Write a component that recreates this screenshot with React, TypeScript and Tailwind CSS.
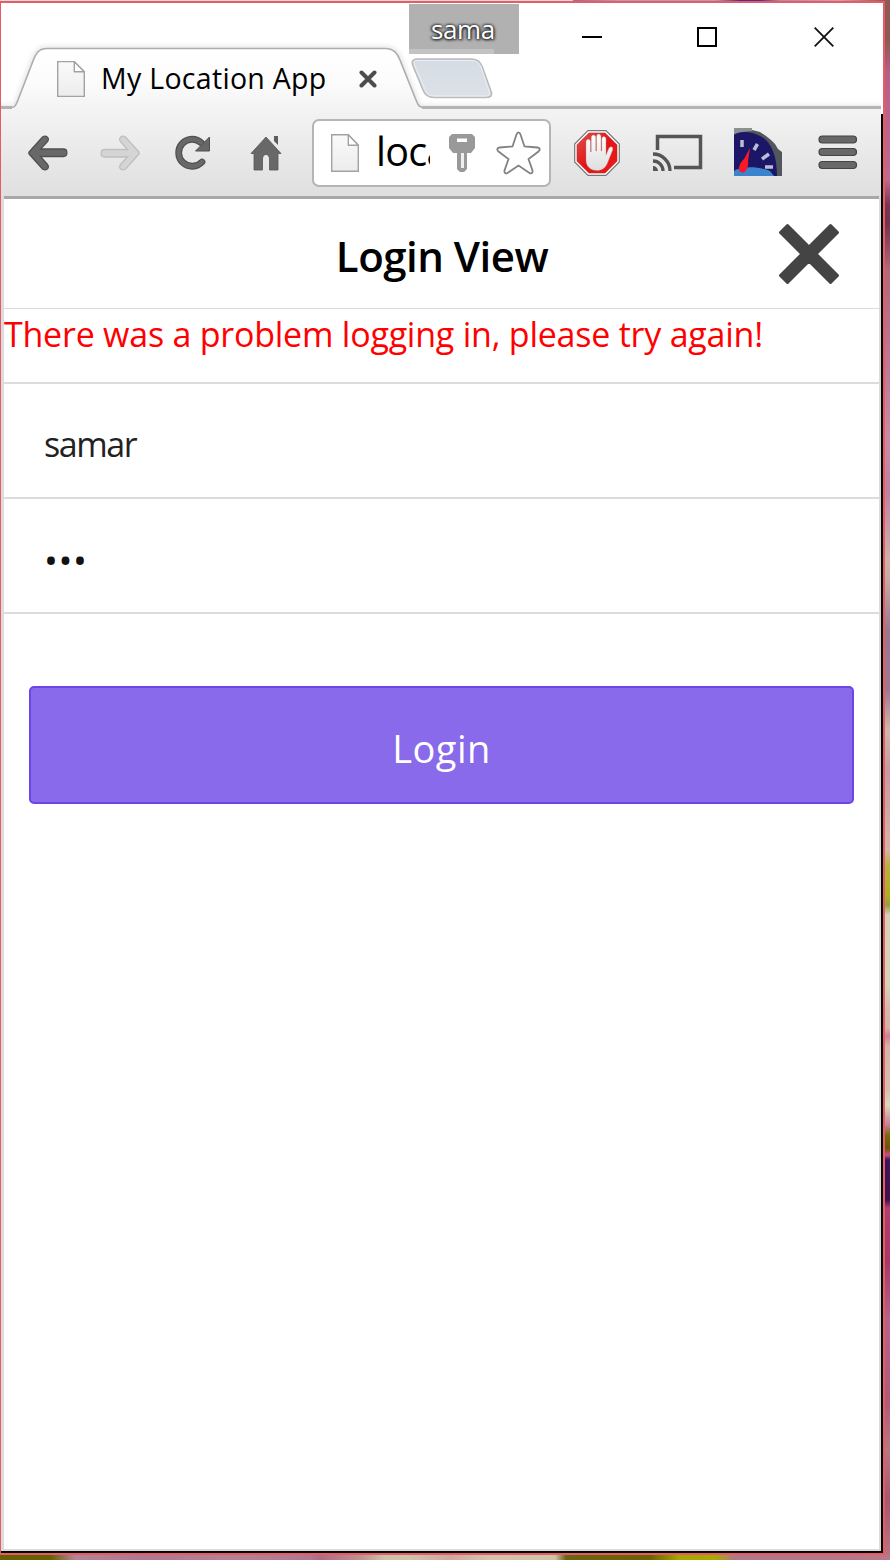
import React from "react";

const wallpaper = {
  background:
    "linear-gradient(180deg,#905a55 0px,#8e5a50 40px,#b85f88 75px,#c06a8e 180px,#7a3552 205px,#74304c 222px,#b06a78 270px,#bb7390 340px,#c98ba3 440px,#c080a0 490px,#d0b0a8 560px,#c8a8a0 580px,#9a7890 630px,#a07890 690px,#d0b8a8 730px,#c89aa0 770px,#d5b3a6 850px,#b8b040 866px,#b0b020 895px,#96a040 905px,#d8d0b8 915px,#d5d3b8 985px,#d4b8a8 1010px,#d4b4a8 1028px,#d08090 1036px,#d4b4a8 1046px,#d8bdac 1090px,#d8dabc 1105px,#c88090 1125px,#7a6a10 1135px,#6b5400 1148px,#c85080 1155px,#3a145c 1160px,#45104f 1200px,#b04070 1208px,#a83868 1260px,#b5658a 1320px,#b05a78 1400px,#b87880 1450px,#a85870 1500px,#b87880 1560px)",
};
const wallpaperBottom = {
  background:
    "linear-gradient(90deg,#666000 0px,#666000 50px,#b48494 75px,#b07890 150px,#b68294 230px,#b07890 310px,#b06a84 320px,#c09090 360px,#cdc2a8 385px,#cfc3aa 410px,#d0a8a0 450px,#d4c4aa 490px,#cfc3a5 555px,#6a6410 566px,#6e6000 650px,#a8a800 680px,#a8aa00 715px,#b07888 735px,#b87888 890px)",
};
const wallpaperTop = {
  background:
    "linear-gradient(90deg,#dcdcdc 0px,#dcdcdc 572px,#9c6a90 574px,#b0a0b8 620px,#b0a0b8 715px,#4a3090 740px,#4a3090 760px,#a890a8 780px,#d0a0b0 840px,#905a55 885px)",
};

function ChromeBackdrop() {
  return (
    <svg className="absolute left-0 top-0" width="880" height="193" viewBox="1 3 880 193">
      <defs>
        <linearGradient id="chrome" gradientUnits="userSpaceOnUse" x1="0" y1="48" x2="0" y2="196">
          <stop offset="0" stopColor="#ffffff" />
          <stop offset="0.22" stopColor="#fcfcfc" />
          <stop offset="0.42" stopColor="#f3f3f3" />
          <stop offset="1" stopColor="#dfdfdf" />
        </linearGradient>
        <linearGradient id="newtab" x1="0" y1="0" x2="0" y2="1">
          <stop offset="0" stopColor="#d5dce4" />
          <stop offset="1" stopColor="#dce1e8" />
        </linearGradient>
        <filter id="soft" x="-5%" y="-20%" width="110%" height="140%">
          <feGaussianBlur stdDeviation="2.5" />
        </filter>
      </defs>
      <path d="M-8 107.5H11C15 107.5 16 105 18 100L33 61C36 53 39 48.5 47 48.5H386C393 48.5 397 52 400 60L416 100C418 105 419 107.5 424 107.5H890" fill="none" stroke="#bbb" strokeWidth="4" opacity=".45" filter="url(#soft)" />
      <path d="M-8 107.5H11C15 107.5 16 105 18 100L33 61C36 53 39 48.5 47 48.5H386C393 48.5 397 52 400 60L416 100C418 105 419 107.5 424 107.5H890V200H-8Z" fill="url(#chrome)" />
      <path d="M-8 107.5H11C15 107.5 16 105 18 100L33 61C36 53 39 48.5 47 48.5H386C393 48.5 397 52 400 60L416 100C418 105 419 107.5 424 107.5" fill="none" stroke="#adadad" strokeWidth="1.6" />
      <path d="M1 107.5H12M422 107.5H890" stroke="#b4b4b4" strokeWidth="3" />
      <path d="M417 59H471C477 59 480 61 482 66L491 91C493 96 490 97.500 486 97.500H434C428 97.500 425 95 423 90L413 66C411 61 413 59 417 59Z" fill="url(#newtab)" stroke="#b8babd" strokeWidth="1.500" />
      <path d="M418 60.500H470C476 60.500 479 62 481 67L489 91C490 95 489 96 485 96H435C429 96 427 94 425 89L415 66C413.500 62 414 60.500 418 60.500Z" fill="none" stroke="#eceff2" strokeWidth="1" />
    </svg>
  );
}

function PageIcon({ className, id }: { className: string; id: string }) {
  return (
    <svg className={className} viewBox="0 0 28 37" preserveAspectRatio="none">
      <defs>
        <linearGradient id={id} x1="0" y1="0" x2="0" y2="1">
          <stop offset="0" stopColor="#fafafa" />
          <stop offset="1" stopColor="#ececec" />
        </linearGradient>
      </defs>
      <path d="M.7.7H17.300L27.300 11V36.300H.7Z" fill={`url(#${id})`} stroke="#a2a2a2" strokeWidth="1.400" />
      <path d="M17.300.7V11H27.300Z" fill="#fff" stroke="#a2a2a2" strokeWidth="1.400" strokeLinejoin="round" />
    </svg>
  );
}

function Arrow({ className, fill, stroke }: { className: string; fill: string; stroke: string }) {
  return (
    <svg className={className} viewBox="0 0 40 36">
      <path d="M1.500 16.500L14.500 2C18 -.5 22 3 19.500 6.500L12.500 14H35.500C40 14 40 21.500 35.500 21.500H12.500L19.500 29.500C22 33 18 36.500 14.500 34L1.500 19.500C.5 18.300.5 17.700 1.500 16.500Z" fill={fill} stroke={stroke} strokeWidth="1.300" />
    </svg>
  );
}

function StopHand() {
  return (
    <svg className="ml-[23px] size-[46px]" viewBox="0 0 46 46">
      <defs>
        <linearGradient id="red" x1="0" y1="0" x2="1" y2="1">
          <stop offset="0" stopColor="#e05050" />
          <stop offset=".5" stopColor="#e51414" />
          <stop offset="1" stopColor="#f01818" />
        </linearGradient>
        <linearGradient id="hand" x1="0" y1="0" x2="0" y2="1">
          <stop offset="0" stopColor="#fff" />
          <stop offset="1" stopColor="#dedede" />
        </linearGradient>
      </defs>
      <path d="M14 .7H32L45.300 14V32L32 45.300H14L.7 32V14Z" fill="#fff" stroke="#777" strokeWidth="1.200" />
      <path d="M14.800 3H31.200L43 14.800V31.200L31.200 43H14.800L3 31.200V14.800Z" fill="url(#red)" stroke="#b83030" strokeWidth=".6" />
      <path d="M12 28V12C12 8.300 16.500 8.300 16.500 12V22H17.200V7.500C17.200 4 21.800 4 21.800 7.500V21H22.500V6.500C22.500 3 27 3 27 6.500V21H27.700V9C27.700 5.500 32 5.500 32 9V25L34.500 19C36 15.500 40 16.500 38.500 20.500L33.500 33C31 38.500 28 40.500 23 40.500C16 40.500 12 36 12 30Z" fill="url(#hand)" stroke="#b09090" strokeWidth=".4" />
    </svg>
  );
}

function Gauge() {
  return (
    <svg className="ml-[31px] size-[49px]" viewBox="0 0 49 49">
      <path d="M0 0H18V2L26 4L32 8L37 12L41 16L44 21L48 24V48H0Z" fill="#52575b" />
      <path d="M0 0H18V3L8 4L0 6Z" fill="#8b9094" />
      <path d="M0 7C5 3 16 3 24 7C36 12 43 25 43 48H0Z" fill="#1b1766" />
      <path d="M0 43C8 38 24 38 36 43L40 48H0Z" fill="#3b83cc" />
      <path d="M8 12V19M23.500 16L20 22M35 26L28 31M31 39H39" stroke="#b9bed8" strokeWidth="3.500" />
      <path d="M16 20L14 33C14.500 38 13 43 9.500 44.500C5 45 4 41 5.500 38C6 35 8 33 10 31Z" fill="#fc1727" />
    </svg>
  );
}

function Chrome() {
  return (
    <header className="relative h-[193px] w-[880px]">
      <ChromeBackdrop />
      <div className="absolute left-[408px] top-[1px] h-[50px] w-[110px] bg-[#b1b1b1]">
        <div className="h-[45px] pl-[22px] pt-[5px] text-[26px] leading-[40px] tracking-[-0.4px] text-white [text-shadow:0_0_3px_#222,1px_1px_3px_#222,-1px_0_3px_#333]">sama</div>
        <div className="h-[5px] w-[85px] bg-[#c3c3c3]" />
      </div>
      <div className="relative flex h-[106px]">
        <div className="flex w-[410px] items-center pl-[56px] pt-[46px]">
          <PageIcon id="page-tab" className="h-[36px] w-[28px] shrink-0" />
          <span className="ml-[16px] w-[226px] whitespace-nowrap pb-[2px] text-[28.500px] leading-[36px] tracking-[0.3px] text-black">My Location App</span>
          <svg className="ml-[32px] size-[18px]" viewBox="0 0 18 18">
            <path d="M2.500 2.500L15.500 15.500M15.500 2.500L2.500 15.500" stroke="#4d4d4d" strokeWidth="4" strokeLinecap="round" />
          </svg>
        </div>
        <div className="flex pl-[171px] pt-[24px]">
          <svg className="size-[21px]" viewBox="0 0 21 21"><path d="M0 10H20" stroke="#000" strokeWidth="2" /></svg>
          <svg className="ml-[94px] size-[21px]" viewBox="0 0 21 21"><path d="M1 1H19V19H1Z" fill="none" stroke="#000" strokeWidth="2" /></svg>
          <svg className="ml-[96px] size-[21px]" viewBox="0 0 21 21"><path d="M.7.7L19.300 19.300M19.300.7L.7 19.300" stroke="#111" strokeWidth="1.800" /></svg>
        </div>
      </div>
      <div className="relative flex h-[87px] items-center">
        <Arrow className="ml-[27px] h-[36px] w-[40px]" fill="#686868" stroke="#505050" />
        <Arrow className="ml-[32px] h-[36px] w-[40px] rotate-180" fill="#d5d5d5" stroke="#bfbfbf" />
        <svg className="ml-[35px] h-[36px] w-[36px]" viewBox="0 0 36 36">
          <path d="M27 27A13.500 13.500 0 1 1 26.500 8" fill="none" stroke="#505050" strokeWidth="6.800" strokeLinecap="round" />
          <path d="M27 27A13.500 13.500 0 1 1 26.500 8" fill="none" stroke="#686868" strokeWidth="4.500" strokeLinecap="round" />
          <path d="M34.500 2V16H20.500Z" fill="#686868" stroke="#505050" strokeWidth="1" />
        </svg>
        <svg className="ml-[39px] h-[36px] w-[32px]" viewBox="0 0 32 36">
          <path d="M16 2L31 18.500H28V35H19.500V24C19.500 18 12.500 18 12.500 24V35H4V18.500H1Z" fill="#686868" stroke="#555" strokeWidth=".8" />
          <path d="M24 1H28V10L24 6Z" fill="#5d5d5d" />
        </svg>
        <div className="ml-[30px] flex h-[68px] w-[239px] shrink-0 items-center rounded-[7px] border-2 border-[#b5b5b5] bg-white pl-[17px]">
          <PageIcon id="page-url" className="h-[38px] w-[28px] shrink-0" />
          <div className="ml-[17px] h-[52px] w-[54px] overflow-hidden whitespace-nowrap text-[39.500px] leading-[49px] tracking-[-0.7px] text-black">loca</div>
          <svg className="ml-[19px] h-[38px] w-[27px] shrink-0" viewBox="0 0 27 38">
            <path d="M3 0H23L26 3V14L22 19H18V35L15 38H11L8 35V19H4L0 14V3Z" fill="#999" />
            <path d="M8 4.500H18V8H8Z" fill="#fff" />
            <path d="M12 19H15V34H12Z" fill="#eee" />
          </svg>
          <svg className="ml-[20px] h-[44px] w-[45px] shrink-0" viewBox="0 0 45 44">
            <path d="M20.500 3.500C21.500.7 23.500.7 24.500 3.500L28.500 15.500L41.500 16.500C44 16.800 44.500 18.700 42.500 20.500L32.500 28L36.500 39.500C37 42 35.300 43 33.500 42L22.500 34.500L11.500 42C9.700 43 8 42 8.500 39.500L12.500 28L2.500 20.500C.5 18.700 1 16.800 3.500 16.500L16.500 15.500Z" fill="#fff" stroke="#828282" strokeWidth="1.800" />
          </svg>
        </div>
        <StopHand />
        <svg className="ml-[33px] h-[38px] w-[50px]" viewBox="0 0 50 38">
          <path d="M4.500 16V2.500H47.500V33.500H21" fill="none" stroke="#555" strokeWidth="3.500" />
          <path d="M0 20A17 17 0 0 1 17 37M0 27A10 10 0 0 1 10 37" fill="none" stroke="#555" strokeWidth="3.300" />
          <path d="M0 32A5 5 0 0 1 5 37H0Z" fill="#555" />
        </svg>
        <Gauge />
        <svg className="ml-[35px] h-[35px] w-[40px]" viewBox="0 0 40 35">
          <g fill="#686868" stroke="#444" strokeWidth="1.200">
            <rect x="1" y="1" width="37.500" height="7" rx="3.500" />
            <rect x="1" y="13.500" width="37.500" height="7" rx="3.500" />
            <rect x="1" y="26.500" width="37.500" height="7" rx="3.500" />
          </g>
        </svg>
      </div>
    </header>
  );
}

export default function App() {
  return (
    <div className="relative flex h-[1560px] w-[890px] flex-col overflow-hidden font-['Open_Sans','Noto_Sans',sans-serif]" style={wallpaper}>
      <div className="h-px shrink-0" style={wallpaperTop} />
      <div className="relative h-[1554px] w-[885px] shrink-0 border-2 border-l border-[#e85b66] bg-white">
        <div className="flex h-full w-full flex-col border-b-2 border-r-2 border-black bg-white">
          <Chrome />
          <div className="flex min-h-0 flex-1 flex-col border-b-2 border-l-[3px] border-r-2 border-[#dcdcdc]">
            <div className="h-[3px] shrink-0 bg-[#a8a8a8]" />
            <div className="flex h-[110px] shrink-0 items-center border-b border-[#dcdcdc]">
              <div className="w-[102px]" />
              <h1 className="flex-1 pt-[4px] text-center text-[42px] font-[550] leading-[56px] tracking-[-0.5px] text-black">Login View</h1>
              <svg className="mr-[39px] size-[62px]" viewBox="0 0 62 62">
                <path d="M9.500 2.500L31 24L52.500 2.500L59.500 9.500L38 31L59.500 52.500L52.500 59.500L31 38L9.500 59.500L2.500 52.500L24 31L2.500 9.500Z" fill="#444" stroke="#444" strokeWidth="3" strokeLinejoin="round" />
              </svg>
            </div>
            <div className="h-[75px] shrink-0 border-b-2 border-[#dcdcdc] pt-px text-[34px] leading-[48px] tracking-[-0.23px] text-[#ff0000]">
              <span className="whitespace-nowrap">There was a problem logging in, please try again!</span>
            </div>
            <div className="h-[115px] shrink-0 border-b-2 border-[#dcdcdc] pl-[40px] pt-[36px] text-[34px] leading-[48px] tracking-[-1.4px] text-[#222]">samar</div>
            <div className="h-[115px] shrink-0 border-b-2 border-[#dcdcdc] pl-[40px] pt-[37px] text-[37px] leading-[48px] tracking-[0.6px] text-[#111]">•••</div>
            <button className="ml-[25px] mt-[72px] h-[118px] w-[825px] shrink-0 rounded-[5px] border-2 border-[#6b46e5] bg-[#886aea] pt-[6px] text-[38px] tracking-[0.5px] text-white">Login</button>
          </div>
        </div>
        <div className="absolute right-0 top-0 h-[111px] w-[2px] bg-white" />
      </div>
      <div className="h-[5px] shrink-0" style={wallpaperBottom} />
    </div>
  );
}
